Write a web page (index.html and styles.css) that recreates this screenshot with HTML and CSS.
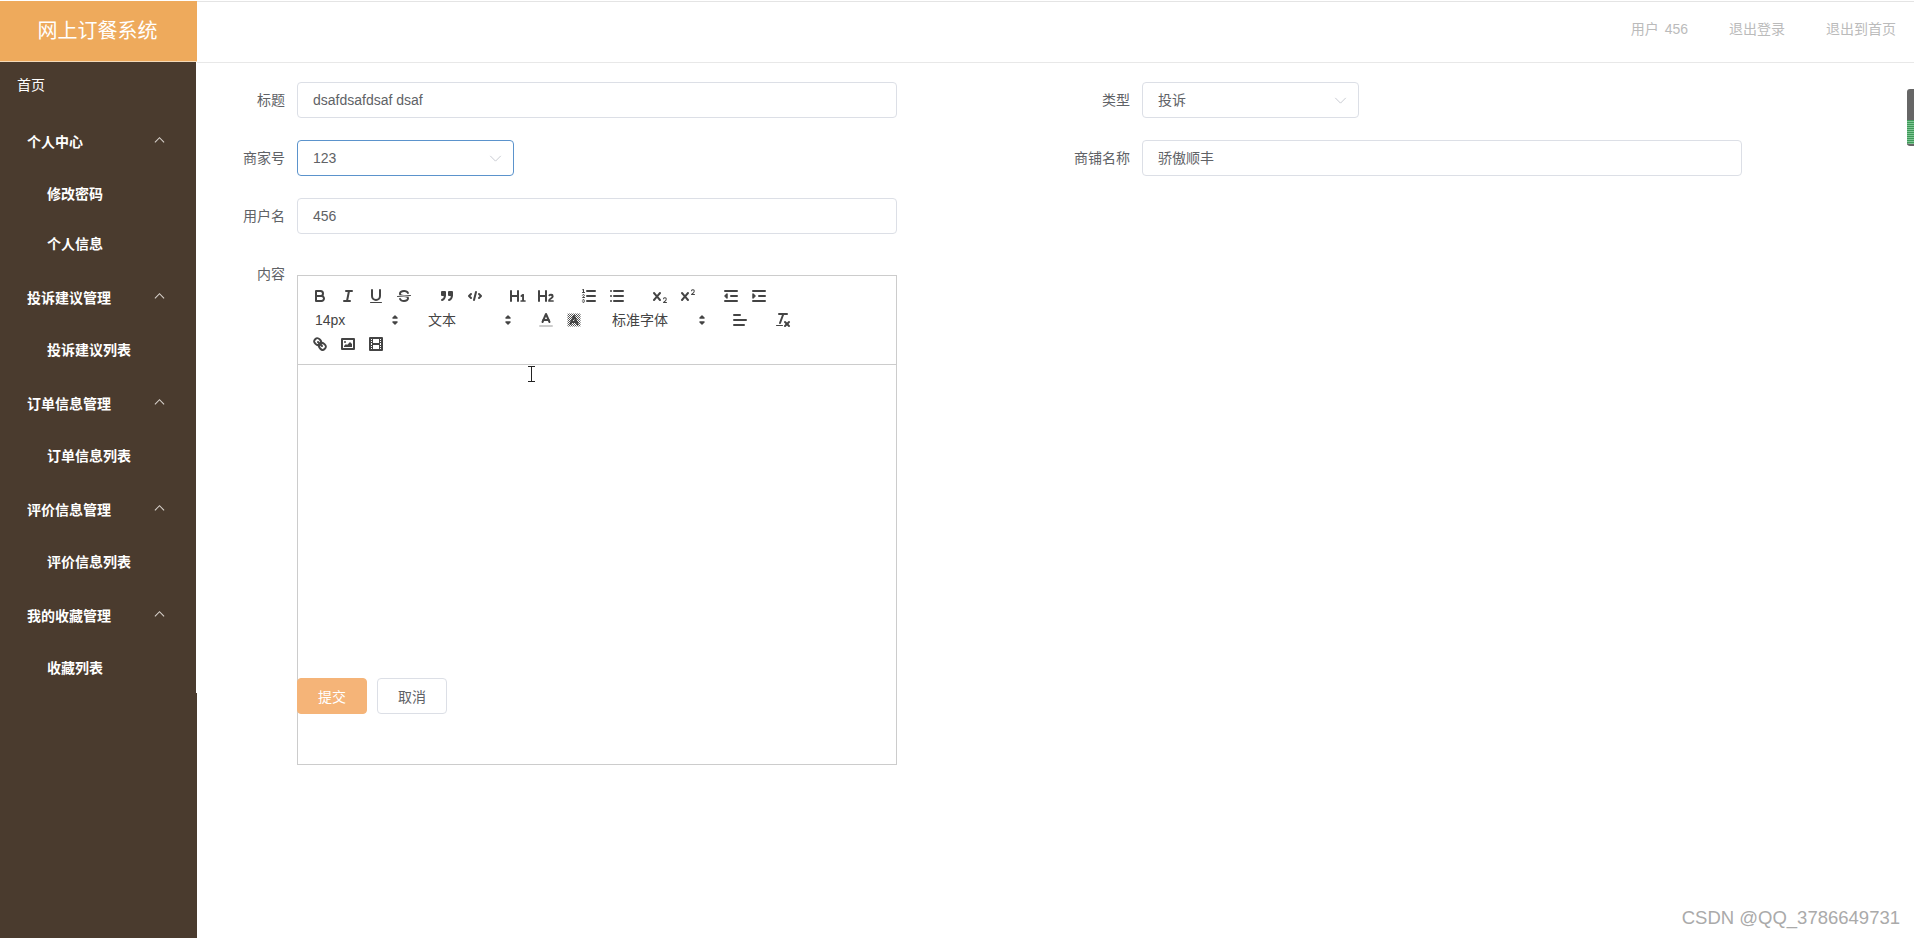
FILE: index.html
```html
<!DOCTYPE html>
<html lang="en">
<head>
    <meta charset="UTF-8">
    <meta name="viewport" content="width=device-width, initial-scale=1.0">
    <title>网上订餐系统</title>
    <link rel="stylesheet" href="styles.css">
</head>
<body>
    <svg class="defs" width="0" height="0">
        <defs>
            <pattern id="hatch" width="2" height="2" patternUnits="userSpaceOnUse">
                <rect width="1" height="1" fill="#555"/>
                <rect x="1" y="1" width="1" height="1" fill="#555"/>
            </pattern>
        </defs>
    </svg>

    <div class="app">
        <aside class="sidebar">
            <div class="logo">网上订餐系统</div>
            <nav class="menu">
                <a class="menu-home">首页</a>

                <div class="menu-title">个人中心<svg class="chevron" viewBox="0 0 12 8"><polyline points="1,6.5 6,1.5 11,6.5"/></svg></div>
                <a class="menu-item">修改密码</a>
                <a class="menu-item">个人信息</a>

                <div class="menu-title">投诉建议管理<svg class="chevron" viewBox="0 0 12 8"><polyline points="1,6.5 6,1.5 11,6.5"/></svg></div>
                <a class="menu-item">投诉建议列表</a>

                <div class="menu-title">订单信息管理<svg class="chevron" viewBox="0 0 12 8"><polyline points="1,6.5 6,1.5 11,6.5"/></svg></div>
                <a class="menu-item">订单信息列表</a>

                <div class="menu-title">评价信息管理<svg class="chevron" viewBox="0 0 12 8"><polyline points="1,6.5 6,1.5 11,6.5"/></svg></div>
                <a class="menu-item">评价信息列表</a>

                <div class="menu-title">我的收藏管理<svg class="chevron" viewBox="0 0 12 8"><polyline points="1,6.5 6,1.5 11,6.5"/></svg></div>
                <a class="menu-item">收藏列表</a>
            </nav>
        </aside>

        <div class="main">
            <header class="topbar">
                <span class="topbar-user">用户 456</span>
                <span>退出登录</span>
                <span>退出到首页</span>
            </header>

            <form class="form">
                <div class="form-row">
                    <div class="field field-left">
                        <label>标题</label>
                        <div class="input wide">dsafdsafdsaf dsaf</div>
                    </div>
                    <div class="field">
                        <label>类型</label>
                        <div class="input select short">投诉<svg class="caret" viewBox="0 0 14 8"><polyline points="1,1 7,7 13,1"/></svg></div>
                    </div>
                </div>
                <div class="form-row">
                    <div class="field field-left">
                        <label>商家号</label>
                        <div class="input select short focused">123<svg class="caret" viewBox="0 0 14 8"><polyline points="1,1 7,7 13,1"/></svg></div>
                    </div>
                    <div class="field">
                        <label>商铺名称</label>
                        <div class="input wide">骄傲顺丰</div>
                    </div>
                </div>
                <div class="form-row">
                    <div class="field field-left">
                        <label>用户名</label>
                        <div class="input wide">456</div>
                    </div>
                </div>

                <div class="field content-field">
                    <label>内容</label>
                    <div class="editor">
                        <div class="toolbar">
                            <span class="formats">
                                <button type="button"><svg viewBox="0 0 18 18"><path class="st" d="M5,4H9.5A2.5,2.5,0,0,1,12,6.5v0A2.5,2.5,0,0,1,9.5,9H5A0,0,0,0,1,5,9V4A0,0,0,0,1,5,4Z"/><path class="st" d="M5,9h5.5A2.5,2.5,0,0,1,13,11.5v0A2.5,2.5,0,0,1,10.5,14H5a0,0,0,0,1,0,0V9A0,0,0,0,1,5,9Z"/></svg></button>
                                <button type="button"><svg viewBox="0 0 18 18"><line class="st" x1="7" x2="13" y1="4" y2="4"/><line class="st" x1="5" x2="11" y1="14" y2="14"/><line class="st" x1="8" x2="10" y1="14" y2="4"/></svg></button>
                                <button type="button"><svg viewBox="0 0 18 18"><path class="st" d="M5,3V9a4.012,4.012,0,0,0,4,4H9a4.012,4.012,0,0,0,4-4V3"/><rect class="fl" height="1" rx="0.5" ry="0.5" width="12" x="3" y="15"/></svg></button>
                                <button type="button"><svg viewBox="0 0 18 18"><line class="st thin" x1="15.5" x2="2.5" y1="8.5" y2="9.5"/><path class="fl" d="M9.007,8C6.542,7.791,6,7.519,6,6.5,6,5.792,7.283,5,9,5c1.571,0,2.765.679,2.969,1.309a1,1,0,0,0,1.9-.617C13.356,4.106,11.354,3,9,3,6.2,3,4,4.538,4,6.5a3.2,3.2,0,0,0,.5,1.843Z"/><path class="fl" d="M8.984,10C11.457,10.208,12,10.479,12,11.5c0,.708-1.283,1.5-3,1.5-1.571,0-2.765-.679-2.969-1.309a1,1,0,1,0-1.9.617C4.644,13.894,6.646,15,9,15c2.8,0,5-1.538,5-3.5a3.2,3.2,0,0,0-.5-1.843Z"/></svg></button>
                            </span>
                            <span class="formats">
                                <button type="button"><svg viewBox="0 0 18 18"><rect class="fl st" height="3" width="3" x="4" y="5"/><rect class="fl st" height="3" width="3" x="11" y="5"/><path class="st" d="M7,8c0,4.031-3,5-3,5"/><path class="st" d="M14,8c0,4.031-3,5-3,5"/></svg></button>
                                <button type="button"><svg viewBox="0 0 18 18"><polyline class="st" points="5 7 3 9 5 11"/><polyline class="st" points="13 7 15 9 13 11"/><line class="st" x1="10" x2="8" y1="5" y2="13"/></svg></button>
                            </span>
                            <span class="formats">
                                <button type="button"><svg viewBox="0 0 18 18"><path class="fl" d="M10,4V14a1,1,0,0,1-2,0V10H3v4a1,1,0,0,1-2,0V4A1,1,0,0,1,3,4V8H8V4a1,1,0,0,1,2,0Zm6.06787,9.209H14.98975V7.59863a.54085.54085,0,0,0-.605-.60547h-.62744a1.01119,1.01119,0,0,0-.748.29688L11.645,8.56641a.5435.5435,0,0,0-.022.8584l.28613.30762a.53861.53861,0,0,0,.84717.0332l.09912-.08789a1.2137,1.2137,0,0,0,.2417-.35254h.02246s-.01123.30859-.01123.60547V13.209H12.041a.54085.54085,0,0,0-.605.60547v.43945a.54085.54085,0,0,0,.605.60547h4.02686a.54085.54085,0,0,0,.605-.60547v-.43945A.54085.54085,0,0,0,16.06787,13.209Z"/></svg></button>
                                <button type="button"><svg viewBox="0 0 18 18"><path class="fl" d="M16.73975,13.81445v.43945a.54085.54085,0,0,1-.605.60547H11.855a.58392.58392,0,0,1-.64893-.60547V14.0127c0-2.90527,3.39941-3.42187,3.39941-4.55469a.77675.77675,0,0,0-.84717-.78125,1.17684,1.17684,0,0,0-.83594.38477c-.2749.26367-.561.374-.85791.13184l-.4292-.34082c-.30811-.24219-.38525-.51758-.1543-.81445a2.97155,2.97155,0,0,1,2.45361-1.17676,2.45393,2.45393,0,0,1,2.68408,2.40918c0,2.45312-3.1792,2.92676-3.27832,3.93848h2.79443A.54085.54085,0,0,1,16.73975,13.81445ZM9,3A.99974.99974,0,0,0,8,4V8H3V4A1,1,0,0,0,1,4V14a1,1,0,0,0,2,0V10H8v4a1,1,0,0,0,2,0V4A.99974.99974,0,0,0,9,3Z"/></svg></button>
                            </span>
                            <span class="formats">
                                <button type="button"><svg viewBox="0 0 18 18"><line class="st" x1="7" x2="15" y1="4" y2="4"/><line class="st" x1="7" x2="15" y1="9" y2="9"/><line class="st" x1="7" x2="15" y1="14" y2="14"/><line class="st thin" x1="2.5" x2="4.5" y1="5.5" y2="5.5"/><path class="fl" d="M3.5,6A0.5,0.5,0,0,1,3,5.5V3.085l-0.276.138A0.5,0.5,0,0,1,2.053,3c-0.124-.247-0.023-0.324.224-0.447l1-.5A0.5,0.5,0,0,1,4,2.5v3A0.5,0.5,0,0,1,3.5,6Z"/><path class="st thin" d="M4.5,10.5h-2c0-.234,1.85-1.076,1.85-2.234A0.959,0.959,0,0,0,2.5,8.156"/><path class="st thin" d="M2.5,14.846a0.959,0.959,0,0,0,1.85-.109A0.7,0.7,0,0,0,3.75,14a0.688,0.688,0,0,0,.6-0.736,0.959,0.959,0,0,0-1.85-.109"/></svg></button>
                                <button type="button"><svg viewBox="0 0 18 18"><line class="st" x1="6" x2="15" y1="4" y2="4"/><line class="st" x1="6" x2="15" y1="9" y2="9"/><line class="st" x1="6" x2="15" y1="14" y2="14"/><line class="st" x1="3" x2="3" y1="4" y2="4"/><line class="st" x1="3" x2="3" y1="9" y2="9"/><line class="st" x1="3" x2="3" y1="14" y2="14"/></svg></button>
                            </span>
                            <span class="formats">
                                <button type="button"><svg viewBox="0 0 18 18"><path class="fl" d="M15.5,15H13.861a3.858,3.858,0,0,0,1.914-2.975,1.8,1.8,0,0,0-1.6-1.751A1.921,1.921,0,0,0,12.021,11.7a0.50013,0.50013,0,1,0,.957.291h0a0.914,0.914,0,0,1,1.053-.725,0.81,0.81,0,0,1,.744.762c0,1.076-1.16971,1.86982-1.93971,2.43082A1.45639,1.45639,0,0,0,12,15.5a0.5,0.5,0,0,0,.5.5h3A0.5,0.5,0,0,0,15.5,15Z"/><path class="fl" d="M9.65,5.241a1,1,0,0,0-1.409.108L6,7.964,3.759,5.349A1,1,0,0,0,2.192,6.59178Q2.2,6.6,2.241,6.651L4.684,9.5,2.241,12.35A1,1,0,0,0,3.71,13.70722q0.04-.04.049-0.057L6,11.036,8.241,13.65a1,1,0,1,0,1.567-1.24277Q9.8,12.4,9.759,12.35L7.316,9.5,9.759,6.651A1,1,0,0,0,9.65,5.241Z"/></svg></button>
                                <button type="button"><svg viewBox="0 0 18 18"><path class="fl" d="M15.5,7H13.861a4.015,4.015,0,0,0,1.914-2.975,1.8,1.8,0,0,0-1.6-1.751A1.922,1.922,0,0,0,12.021,3.7a0.5,0.5,0,1,0,.957.291,0.917,0.917,0,0,1,1.053-.725,0.81,0.81,0,0,1,.744.762c0,1.077-1.164,1.925-1.934,2.486A1.423,1.423,0,0,0,12,7.5a0.5,0.5,0,0,0,.5.5h3A0.5,0.5,0,0,0,15.5,7Z"/><path class="fl" d="M9.651,5.241a1,1,0,0,0-1.41.108L6,7.964,3.759,5.349a1,1,0,1,0-1.519,1.3L4.683,9.5,2.241,12.35a1,1,0,1,0,1.519,1.3L6,11.036,8.241,13.65a1,1,0,0,0,1.519-1.3L7.317,9.5,9.759,6.651A1,1,0,0,0,9.651,5.241Z"/></svg></button>
                            </span>
                            <span class="formats">
                                <button type="button"><svg viewBox="0 0 18 18"><line class="st" x1="3" x2="15" y1="14" y2="14"/><line class="st" x1="3" x2="15" y1="4" y2="4"/><line class="st" x1="9" x2="15" y1="9" y2="9"/><polyline class="fl st mid" points="5 7 5 11 3 9 5 7"/></svg></button>
                                <button type="button"><svg viewBox="0 0 18 18"><line class="st" x1="3" x2="15" y1="14" y2="14"/><line class="st" x1="3" x2="15" y1="4" y2="4"/><line class="st" x1="9" x2="15" y1="9" y2="9"/><polyline class="fl st mid" points="3 7 3 11 5 9 3 7"/></svg></button>
                            </span>
                            <span class="formats">
                                <span class="picker">14px<svg viewBox="0 0 18 18"><polygon class="fl st mid" points="7 11 9 13 11 11 7 11"/><polygon class="fl st mid" points="7 7 9 5 11 7 7 7"/></svg></span>
                            </span>
                            <span class="formats">
                                <span class="picker">文本<svg viewBox="0 0 18 18"><polygon class="fl st mid" points="7 11 9 13 11 11 7 11"/><polygon class="fl st mid" points="7 7 9 5 11 7 7 7"/></svg></span>
                            </span>
                            <span class="formats">
                                <button type="button"><svg viewBox="0 0 18 18"><line class="st color-label" x1="3" x2="15" y1="15" y2="15"/><polyline class="st" points="5.5 11 9 3 12.5 11"/><line class="st" x1="11.63" x2="6.38" y1="9" y2="9"/></svg></button>
                                <button type="button"><svg viewBox="0 0 18 18"><rect x="2.5" y="2.5" width="13" height="13" fill="url(#hatch)"/><polyline class="st" points="5.5 13 9 5 12.5 13"/><line class="st" x1="11.63" x2="6.38" y1="11" y2="11"/></svg></button>
                            </span>
                            <span class="formats">
                                <span class="picker picker-font">标准字体<svg viewBox="0 0 18 18"><polygon class="fl st mid" points="7 11 9 13 11 11 7 11"/><polygon class="fl st mid" points="7 7 9 5 11 7 7 7"/></svg></span>
                            </span>
                            <span class="formats">
                                <button type="button"><svg viewBox="0 0 18 18"><line class="st" x1="3" x2="15" y1="9" y2="9"/><line class="st" x1="3" x2="13" y1="14" y2="14"/><line class="st" x1="3" x2="9" y1="4" y2="4"/></svg></button>
                            </span>
                            <span class="formats">
                                <button type="button"><svg viewBox="0 0 18 18"><line class="st" x1="5" x2="13" y1="3" y2="3"/><line class="st" x1="6" x2="9.35" y1="12" y2="3"/><line class="st" x1="11" x2="15" y1="11" y2="15"/><line class="st" x1="15" x2="11" y1="11" y2="15"/><rect class="fl" height="1" rx="0.5" ry="0.5" width="7" x="2" y="14"/></svg></button>
                            </span>
                            <span class="formats">
                                <button type="button"><svg viewBox="0 0 18 18"><line class="st" x1="7" x2="11" y1="7" y2="11"/><path class="st" d="M8.9,4.577a3.476,3.476,0,0,1,.36,4.679A3.476,3.476,0,0,1,4.577,8.9C3.185,7.5,2.035,6.4,4.217,4.217S7.5,3.185,8.9,4.577Z"/><path class="st" d="M13.423,9.1a3.476,3.476,0,0,0-4.679-.36,3.476,3.476,0,0,0,.36,4.679c1.392,1.392,2.5,2.542,4.679.36S14.815,10.5,13.423,9.1Z"/></svg></button>
                                <button type="button"><svg viewBox="0 0 18 18"><rect class="st" height="10" width="12" x="3" y="4"/><circle class="fl" cx="6" cy="7" r="1"/><polyline class="fl" points="5 12 5 11 7 9 8 10 11 7 13 9 13 12 5 12"/></svg></button>
                                <button type="button"><svg viewBox="0 0 18 18"><rect class="st" height="12" width="12" x="3" y="3"/><rect class="fl" height="12" width="1" x="5" y="3"/><rect class="fl" height="12" width="1" x="12" y="3"/><rect class="fl" height="2" width="8" x="5" y="8"/><rect class="fl" height="1" width="3" x="3" y="5"/><rect class="fl" height="1" width="3" x="3" y="7"/><rect class="fl" height="1" width="3" x="3" y="10"/><rect class="fl" height="1" width="3" x="3" y="12"/><rect class="fl" height="1" width="3" x="12" y="5"/><rect class="fl" height="1" width="3" x="12" y="7"/><rect class="fl" height="1" width="3" x="12" y="10"/><rect class="fl" height="1" width="3" x="12" y="12"/></svg></button>
                            </span>
                        </div>
                    </div>
                </div>

                <div class="actions">
                    <button type="button" class="btn btn-primary">提交</button>
                    <button type="button" class="btn">取消</button>
                </div>
            </form>
        </div>
    </div>

    <!-- things from the capture that sit over the page -->
    <svg class="text-cursor" viewBox="0 0 7 16"><path d="M0,0.5h7M3.5,0.5v15M0,15.5h7"/></svg>
    <div class="side-widget"></div>
    <div class="watermark">CSDN @QQ_3786649731</div>
</body>
</html>
```

FILE: styles.css
```css
* { box-sizing: border-box; }
html, body { height: 100%; }
body { margin: 0; background: #fff; color: #606266; font-family: "Liberation Sans", "Noto Sans CJK SC", sans-serif; font-size: 14px; overflow: hidden; }
.defs { position: absolute; }

.app { display: flex; height: 938px; padding-top: 1px; }

/* sidebar */
.sidebar { width: 197px; flex: none; background: #4a3b2e; }
.logo { height: 61px; padding-right: 2px; background: #eeaa5c; color: #fff; font-size: 20px; line-height: 60px; text-align: center; border-bottom: 1px solid #f4d9b8; }
.menu { height: 631px; border-right: 1px solid #fff; color: #fff; }
.menu-home { display: block; height: 46px; line-height: 46px; padding-left: 17px; margin-bottom: 5px; }
.menu-title { display: flex; align-items: center; justify-content: space-between; height: 56px; padding: 0 31px 0 27px; font-weight: bold; }
.menu-item { display: block; height: 50px; line-height: 50px; padding-left: 47px; font-weight: bold; }
.chevron { width: 11px; height: 8px; margin-top: -2px; }
.chevron polyline { fill: none; stroke: #d8d2cc; stroke-width: 1.2; }

/* top bar */
.main { flex: 1; min-width: 0; }
.topbar { display: flex; justify-content: flex-end; align-items: center; gap: 41px; height: 62px; padding: 0 18px 8px 0; border-top: 1px solid #e4e4e4; border-bottom: 1px solid #e8e8e8; color: #bbb; }
.topbar-user { word-spacing: 2px; }

/* form */
.form { padding: 19px 0 0 0; }
.form-row { display: flex; margin-bottom: 22px; }
.field { display: flex; }
.field-left { width: 845px; flex: none; }
.field label { width: 88px; flex: none; margin-right: 12px; text-align: right; line-height: 36px; }
.input { height: 36px; line-height: 34px; padding: 0 15px; border: 1px solid #dcdfe6; border-radius: 4px; background: #fff; }
.wide { width: 600px; }
.short { width: 217px; }
.select { display: flex; justify-content: space-between; align-items: center; padding-right: 11px; }
.focused { border-color: #5b93cc; }
.caret { width: 13px; height: 7px; }
.caret polyline { fill: none; stroke: #c0c4cc; stroke-width: 1; }

/* rich text editor */
.content-field { height: 400px; margin-bottom: 22px; }
.editor { width: 600px; height: 490px; margin-top: 19px; border: 1px solid #ccc; }
.toolbar { display: flex; flex-wrap: wrap; padding: 8px; border-bottom: 1px solid #ccc; }
.formats { display: flex; margin-right: 15px; }
.toolbar button { width: 28px; height: 24px; padding: 3px 5px; border: none; background: none; }
.toolbar svg { display: block; width: 18px; height: 18px; }
.st { fill: none; stroke: #444; stroke-width: 2; stroke-linecap: round; stroke-linejoin: round; }
.st.thin { stroke-width: 1; }
.st.mid { stroke-width: 1.5; }
.st.color-label { stroke: #ccc; }
.fl, .fl.st { fill: #444; }
.picker { position: relative; display: block; width: 98px; height: 24px; line-height: 24px; padding-left: 9px; color: #444; }
.picker svg { position: absolute; right: 0; top: 3px; }
.picker-font { width: 108px; }

/* buttons sit on top of the editor box, the editor overflows its row */
.actions { display: flex; gap: 10px; padding-left: 100px; }
.btn { width: 70px; height: 36px; padding: 0; border: 1px solid #dcdfe6; border-radius: 4px; background: #fff; color: #606266; font: inherit; }
.btn-primary { border-color: #f5b478; background: #f5b478; color: #fff; }

/* overlays */
.text-cursor { position: absolute; left: 528px; top: 366px; width: 7px; height: 16px; }
.text-cursor path { fill: none; stroke: #222; stroke-width: 1; }
.side-widget { position: absolute; right: 0; top: 89px; width: 7px; height: 57px; border-radius: 3px 0 0 3px; border-bottom: 2px solid #666; background: repeating-linear-gradient(#3e9a58 0 1px, #7fc494 1px 2px) 0 31px / 100% 100% no-repeat, #666; }
.watermark { position: absolute; right: 14px; top: 907px; font-size: 18.5px; color: #aaa; }
```
